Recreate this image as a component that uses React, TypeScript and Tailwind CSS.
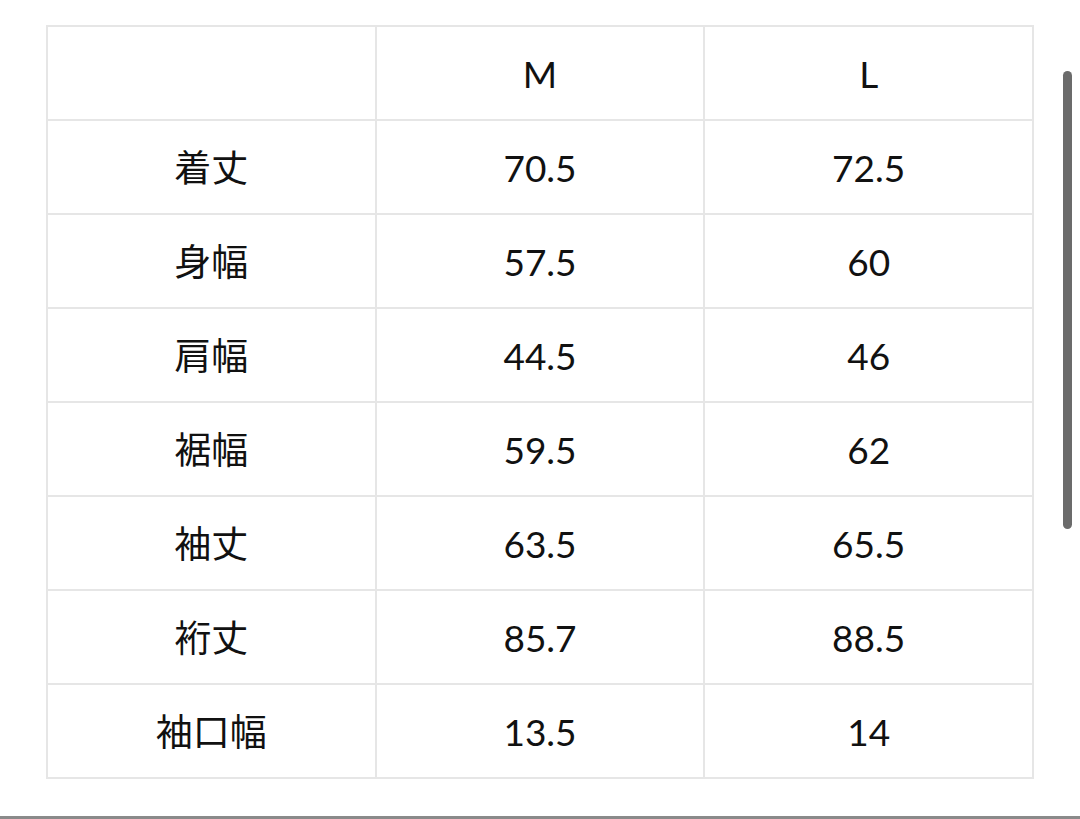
const rows: [string, string, string][] = [
  ["着丈", "70.5", "72.5"],
  ["身幅", "57.5", "60"],
  ["肩幅", "44.5", "46"],
  ["裾幅", "59.5", "62"],
  ["袖丈", "63.5", "65.5"],
  ["裄丈", "85.7", "88.5"],
  ["袖口幅", "13.5", "14"],
];

export default function App() {
  return (
    <div
      className="relative h-[819px] w-[1080px] overflow-hidden bg-white text-[#111111]"
      style={{ fontFamily: 'Lato, "Noto Sans CJK JP", sans-serif' }}
    >
      <div className="pl-[46px] pt-[25px]">
        <table className="w-[988px] table-fixed border-collapse text-[37px] leading-none">
          <thead>
            <tr className="h-[94px]">
              <th className="border-2 border-[#e6e6e6] font-normal"></th>
              <th className="border-2 border-[#e6e6e6] font-normal">M</th>
              <th className="border-2 border-[#e6e6e6] font-normal">L</th>
            </tr>
          </thead>
          <tbody>
            {rows.map(([label, m, l]) => (
              <tr key={label} className="h-[94px]">
                <td className="border-2 border-[#e6e6e6] text-center">{label}</td>
                <td className="border-2 border-[#e6e6e6] text-center">{m}</td>
                <td className="border-2 border-[#e6e6e6] text-center">{l}</td>
              </tr>
            ))}
          </tbody>
        </table>
      </div>

      {/* scrollbar thumb */}
      <div className="absolute left-[1063px] top-[71px] h-[458px] w-[9px] rounded-full bg-[#6b6b6b]" />

      <div className="absolute bottom-0 left-0 h-[3px] w-full bg-[#8a8a8a]" />
    </div>
  );
}
